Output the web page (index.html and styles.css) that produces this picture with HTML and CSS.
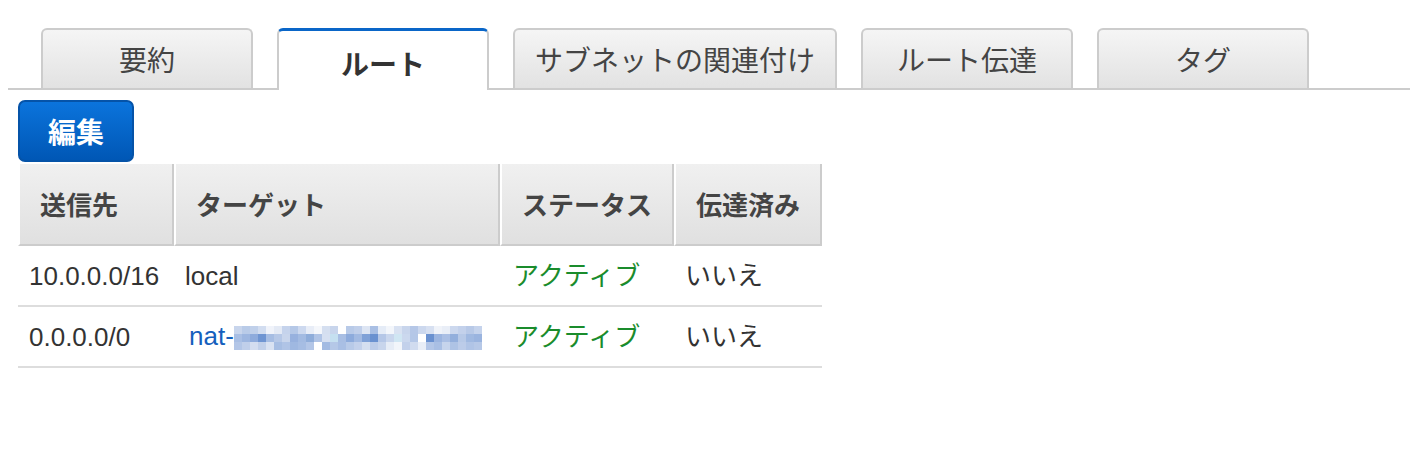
FILE: index.html
```html
<!DOCTYPE html>
<html lang="ja">
<head>
<meta charset="utf-8">
<title>ルート</title>
<link rel="stylesheet" href="styles.css">
</head>
<body>
<div class="tabs">
  <div class="tab">要約</div>
  <div class="tab active">ルート</div>
  <div class="tab">サブネットの関連付け</div>
  <div class="tab">ルート伝達</div>
  <div class="tab">タグ</div>
</div>
<div class="panel">
  <button class="btn">編集</button>
  <table class="routes">
    <colgroup>
      <col class="c1"><col class="c2"><col class="c3"><col class="c4">
    </colgroup>
    <thead>
      <tr><th>送信先</th><th>ターゲット</th><th>ステータス</th><th>伝達済み</th></tr>
    </thead>
    <tbody>
      <tr>
        <td>10.0.0.0/16</td>
        <td>local</td>
        <td class="ok">アクティブ</td>
        <td>いいえ</td>
      </tr>
      <tr>
        <td>0.0.0.0/0</td>
        <td><a class="link" href="#">nat-<svg class="mosaic" width="248" height="24" viewBox="0 0 31 3" preserveAspectRatio="none" shape-rendering="crispEdges">
          <g>
            <rect x="0" y="0" width="1" height="1" fill="#c8d5ec"/><rect x="1" y="0" width="1" height="1" fill="#b9cbe8"/><rect x="2" y="0" width="1" height="1" fill="#c0d0ea"/><rect x="3" y="0" width="1" height="1" fill="#d2ddf0"/><rect x="4" y="0" width="1" height="1" fill="#f0f3fa"/><rect x="5" y="0" width="1" height="1" fill="#e4eaf5"/><rect x="6" y="0" width="1" height="1" fill="#c5d3ec"/><rect x="7" y="0" width="1" height="1" fill="#b5c8e7"/><rect x="8" y="0" width="1" height="1" fill="#cdd9ef"/><rect x="9" y="0" width="1" height="1" fill="#e8edf7"/><rect x="10" y="0" width="1" height="1" fill="#f5f7fb"/><rect x="11" y="0" width="1" height="1" fill="#d5dff0"/><rect x="12" y="0" width="1" height="1" fill="#c8d5ec"/><rect x="13" y="0" width="1" height="1" fill="#ffffff"/><rect x="14" y="0" width="1" height="1" fill="#b8cae8"/><rect x="15" y="0" width="1" height="1" fill="#c0cfea"/><rect x="16" y="0" width="1" height="1" fill="#dde5f3"/><rect x="17" y="0" width="1" height="1" fill="#a9bfe4"/><rect x="18" y="0" width="1" height="1" fill="#e5ecf7"/><rect x="19" y="0" width="1" height="1" fill="#f3f6fb"/><rect x="20" y="0" width="1" height="1" fill="#d9e2f2"/><rect x="21" y="0" width="1" height="1" fill="#c8d5ec"/><rect x="22" y="0" width="1" height="1" fill="#b5c7e7"/><rect x="23" y="0" width="1" height="1" fill="#ccd8ee"/><rect x="24" y="0" width="1" height="1" fill="#d7e0f1"/><rect x="25" y="0" width="1" height="1" fill="#f0f3f9"/><rect x="26" y="0" width="1" height="1" fill="#e9eef7"/><rect x="27" y="0" width="1" height="1" fill="#ccd8ee"/><rect x="28" y="0" width="1" height="1" fill="#c3d1eb"/><rect x="29" y="0" width="1" height="1" fill="#b8c9e7"/><rect x="30" y="0" width="1" height="1" fill="#c5d3ec"/>
            <rect x="0" y="1" width="1" height="1" fill="#a9bfe4"/><rect x="1" y="1" width="1" height="1" fill="#9db6e0"/><rect x="2" y="1" width="1" height="1" fill="#8eabdc"/><rect x="3" y="1" width="1" height="1" fill="#6f95d2"/><rect x="4" y="1" width="1" height="1" fill="#a6bde3"/><rect x="5" y="1" width="1" height="1" fill="#b6c8e7"/><rect x="6" y="1" width="1" height="1" fill="#c8d5ec"/><rect x="7" y="1" width="1" height="1" fill="#97b1de"/><rect x="8" y="1" width="1" height="1" fill="#a3bbe2"/><rect x="9" y="1" width="1" height="1" fill="#8fadda"/><rect x="10" y="1" width="1" height="1" fill="#b0c4e6"/><rect x="11" y="1" width="1" height="1" fill="#d6e0f1"/><rect x="12" y="1" width="1" height="1" fill="#c5e0f0"/><rect x="13" y="1" width="1" height="1" fill="#a8bee3"/><rect x="14" y="1" width="1" height="1" fill="#8dabdc"/><rect x="15" y="1" width="1" height="1" fill="#a2bae2"/><rect x="16" y="1" width="1" height="1" fill="#7fa1d7"/><rect x="17" y="1" width="1" height="1" fill="#6a91d0"/><rect x="18" y="1" width="1" height="1" fill="#b5c7e7"/><rect x="19" y="1" width="1" height="1" fill="#c9d6ed"/><rect x="20" y="1" width="1" height="1" fill="#d0e6f3"/><rect x="21" y="1" width="1" height="1" fill="#cbd8ee"/><rect x="22" y="1" width="1" height="1" fill="#b4c7e7"/><rect x="23" y="1" width="1" height="1" fill="#ffffff"/><rect x="24" y="1" width="1" height="1" fill="#6a91d0"/><rect x="25" y="1" width="1" height="1" fill="#9cb5e0"/><rect x="26" y="1" width="1" height="1" fill="#aabfe4"/><rect x="27" y="1" width="1" height="1" fill="#93afdc"/><rect x="28" y="1" width="1" height="1" fill="#b7c9e7"/><rect x="29" y="1" width="1" height="1" fill="#a0b9e1"/><rect x="30" y="1" width="1" height="1" fill="#9ab4df"/>
            <rect x="0" y="2" width="1" height="1" fill="#b3c6e7"/><rect x="1" y="2" width="1" height="1" fill="#c0cfea"/><rect x="2" y="2" width="1" height="1" fill="#d3ddf0"/><rect x="3" y="2" width="1" height="1" fill="#c1d0ea"/><rect x="4" y="2" width="1" height="1" fill="#d9e2f2"/><rect x="5" y="2" width="1" height="1" fill="#a7bee3"/><rect x="6" y="2" width="1" height="1" fill="#b0c4e6"/><rect x="7" y="2" width="1" height="1" fill="#9fb8e1"/><rect x="8" y="2" width="1" height="1" fill="#a6bde3"/><rect x="9" y="2" width="1" height="1" fill="#b3c6e7"/><rect x="10" y="2" width="1" height="1" fill="#ffffff"/><rect x="11" y="2" width="1" height="1" fill="#a3bbe2"/><rect x="12" y="2" width="1" height="1" fill="#b5c8e7"/><rect x="13" y="2" width="1" height="1" fill="#a9bfe4"/><rect x="14" y="2" width="1" height="1" fill="#b8cae8"/><rect x="15" y="2" width="1" height="1" fill="#c3d1eb"/><rect x="16" y="2" width="1" height="1" fill="#d5dff0"/><rect x="17" y="2" width="1" height="1" fill="#bccce9"/><rect x="18" y="2" width="1" height="1" fill="#c8d5ec"/><rect x="19" y="2" width="1" height="1" fill="#e6ecf6"/><rect x="20" y="2" width="1" height="1" fill="#f2f5fa"/><rect x="21" y="2" width="1" height="1" fill="#c3d1eb"/><rect x="22" y="2" width="1" height="1" fill="#d0dbef"/><rect x="23" y="2" width="1" height="1" fill="#e9eef7"/><rect x="24" y="2" width="1" height="1" fill="#b3c6e7"/><rect x="25" y="2" width="1" height="1" fill="#a9bfe4"/><rect x="26" y="2" width="1" height="1" fill="#c6d4ec"/><rect x="27" y="2" width="1" height="1" fill="#aec3e5"/><rect x="28" y="2" width="1" height="1" fill="#bccce9"/><rect x="29" y="2" width="1" height="1" fill="#b0c4e6"/><rect x="30" y="2" width="1" height="1" fill="#b6c8e7"/>
          </g>
        </svg></a></td>
        <td class="ok">アクティブ</td>
        <td>いいえ</td>
      </tr>
    </tbody>
  </table>
</div>
</body>
</html>
```
FILE: styles.css
```css
* { box-sizing: border-box; }

html, body {
  margin: 0;
  padding: 0;
  background: #fff;
}

body {
  font-family: "Liberation Sans", "Noto Sans CJK JP", sans-serif;
  color: #333;
  width: 1410px;
  height: 454px;
  overflow: hidden;
}

.tabs {
  display: flex;
  align-items: flex-end;
  gap: 24px;
  margin-left: 8px;
  padding: 28px 0 0 33px;
  border-bottom: 2px solid #cccccc;
}

.tab {
  min-width: 212px;
  height: 60px;
  padding: 0 20px;
  display: flex;
  align-items: center;
  justify-content: center;
  border: 2px solid #cccccc;
  border-bottom: none;
  border-radius: 6px 6px 0 0;
  background: linear-gradient(#f5f5f5, #e2e2e2);
  font-family: "Noto Sans CJK JP", sans-serif;
  font-size: 28px;
  line-height: 1;
  color: #444;
  white-space: nowrap;
}

.tab.active {
  height: 62px;
  margin-bottom: -2px;
  border-top: 3px solid #0a66c8;
  background: #fff;
  font-weight: bold;
  color: #333;
  padding-top: 4px;
}

.panel {
  padding: 10px 18px 0 18px;
}

.btn {
  display: block;
  width: 116px;
  height: 62px;
  margin: 0 0 2px 0;
  padding: 0;
  border: 2px solid #0553a8;
  border-radius: 7px;
  background: linear-gradient(#0b74dc, #0057b5);
  color: #fff;
  font-family: "Noto Sans CJK JP", sans-serif;
  font-weight: bold;
  font-size: 28px;
  line-height: 1;
}

.routes {
  width: 804px;
  table-layout: fixed;
  border-collapse: separate;
  border-spacing: 0;
}

.c1 { width: 156px; }
.c2 { width: 326px; }
.c3 { width: 174px; }
.c4 { width: 148px; }

.routes th {
  height: 82px;
  padding: 0 0 0 20px;
  text-align: left;
  vertical-align: middle;
  background: linear-gradient(#f0f0f0, #e0e0e0);
  border-left: 2px solid #ffffff;
  border-right: 2px solid #cccccc;
  border-bottom: 2px solid #cccccc;
  font-family: "Noto Sans CJK JP", sans-serif;
  font-weight: bold;
  font-size: 26px;
  line-height: 1;
  color: #444;
  white-space: nowrap;
}

.routes td {
  height: 61px;
  padding: 0 0 0 11px;
  border-bottom: 2px solid #dddddd;
  font-size: 26px;
  line-height: 1;
  color: #333;
  white-space: nowrap;
  vertical-align: middle;
}

.routes td.ok {
  color: #1a8c2c;
  padding-left: 13px;
}

.link {
  color: #1560bd;
  text-decoration: none;
  margin-left: 4px;
}

.mosaic {
  display: inline-block;
  width: 248px;
  height: 24px;
  vertical-align: -5px;
}
```
